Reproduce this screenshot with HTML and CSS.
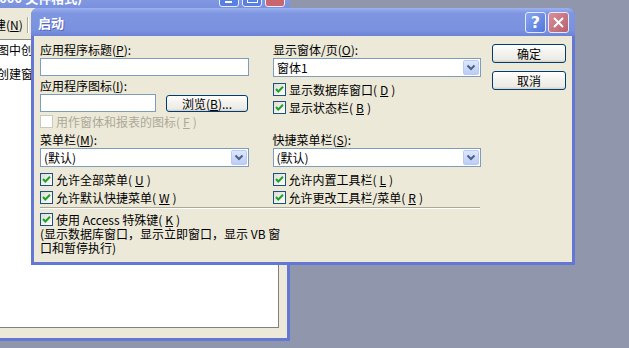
FILE: index.html
```html
<!DOCTYPE html>
<html lang="zh-CN">
<head>
    <meta charset="UTF-8">
    <meta name="viewport" content="width=device-width, initial-scale=1.0">
    <title>启动</title>
    <link rel="stylesheet" href="styles.css">
</head>
<body>
<div class="desktop">
    <!-- database window behind the dialog -->
    <div class="db-window">
        <div class="db-title">
            <span class="db-caption">数据库 (Access 2000 文件格式)</span>
            <div class="db-btns">
                <span class="tb tb-min"></span>
                <span class="tb tb-max"></span>
                <span class="tb tb-close"></span>
            </div>
        </div>
        <div class="db-toolbar">
            <span>新建(<u>N</u>)</span>
            <span class="tsep"></span>
        </div>
        <div class="db-frame">
            <div class="db-list">
                <div class="db-item">在设计视图中创建窗体</div>
                <div class="db-item">使用向导创建窗体</div>
            </div>
        </div>
    </div>

    <!-- startup dialog -->
    <div class="dialog">
        <div class="dlg-title">
            <span class="dlg-caption">启动</span>
            <span class="cap-btn cap-help">?</span>
            <span class="cap-btn cap-close">
                <svg width="13" height="13" viewBox="0 0 13 13"><path d="M2 2 L11 11 M11 2 L2 11" stroke="#fff" stroke-width="2" fill="none"/></svg>
            </span>
        </div>
        <div class="dlg-body">
            <div class="main">
                <div class="top">
                    <div class="col">
                        <div class="lbl">应用程序标题(<u>P</u>):</div>
                        <div class="edit"></div>
                        <div class="lbl lbl-2">应用程序图标(<u>I</u>):</div>
                        <div class="icon-row">
                            <div class="edit edit-short"></div>
                            <button class="btn browse">浏览(<u>B</u>)...</button>
                        </div>
                        <div class="chk chk-off disabled"><span class="box"></span>用作窗体和报表的图标(<u>F</u>)</div>
                    </div>
                    <div class="col">
                        <div class="lbl">显示窗体/页(<u>O</u>):</div>
                        <div class="combo"><span class="combo-text">窗体1</span><span class="drop"><svg width="16" height="15" viewBox="0 0 16 15"><path d="M4.5 5.5 L8 9 L11.5 5.5" stroke="#4d6185" stroke-width="2" fill="none"/></svg></span></div>
                        <div class="chk chk-first"><span class="box"><svg width="11" height="11" viewBox="0 0 11 11"><path d="M2 5 L4.3 7.5 L9 2.8" stroke="#21a121" stroke-width="2" fill="none"/></svg></span>显示数据库窗口(<u>D</u>)</div>
                        <div class="chk"><span class="box"><svg width="11" height="11" viewBox="0 0 11 11"><path d="M2 5 L4.3 7.5 L9 2.8" stroke="#21a121" stroke-width="2" fill="none"/></svg></span>显示状态栏(<u>B</u>)</div>
                    </div>
                </div>

                <div class="mid">
                    <div class="col">
                        <div class="lbl">菜单栏(<u>M</u>):</div>
                        <div class="combo"><span class="combo-text">(默认)</span><span class="drop"><svg width="16" height="15" viewBox="0 0 16 15"><path d="M4.5 5.5 L8 9 L11.5 5.5" stroke="#4d6185" stroke-width="2" fill="none"/></svg></span></div>
                        <div class="chk chk-first"><span class="box"><svg width="11" height="11" viewBox="0 0 11 11"><path d="M2 5 L4.3 7.5 L9 2.8" stroke="#21a121" stroke-width="2" fill="none"/></svg></span>允许全部菜单(<u>U</u>)</div>
                        <div class="chk"><span class="box"><svg width="11" height="11" viewBox="0 0 11 11"><path d="M2 5 L4.3 7.5 L9 2.8" stroke="#21a121" stroke-width="2" fill="none"/></svg></span>允许默认快捷菜单(<u>W</u>)</div>
                    </div>
                    <div class="col">
                        <div class="lbl">快捷菜单栏(<u>S</u>):</div>
                        <div class="combo"><span class="combo-text">(默认)</span><span class="drop"><svg width="16" height="15" viewBox="0 0 16 15"><path d="M4.5 5.5 L8 9 L11.5 5.5" stroke="#4d6185" stroke-width="2" fill="none"/></svg></span></div>
                        <div class="chk chk-first"><span class="box"><svg width="11" height="11" viewBox="0 0 11 11"><path d="M2 5 L4.3 7.5 L9 2.8" stroke="#21a121" stroke-width="2" fill="none"/></svg></span>允许内置工具栏(<u>L</u>)</div>
                        <div class="chk"><span class="box"><svg width="11" height="11" viewBox="0 0 11 11"><path d="M2 5 L4.3 7.5 L9 2.8" stroke="#21a121" stroke-width="2" fill="none"/></svg></span>允许更改工具栏/菜单(<u>R</u>)</div>
                    </div>
                </div>

                <div class="sep"></div>

                <div class="chk chk-keys"><span class="box"><svg width="11" height="11" viewBox="0 0 11 11"><path d="M2 5 L4.3 7.5 L9 2.8" stroke="#21a121" stroke-width="2" fill="none"/></svg></span>使用 Access 特殊键(<u>K</u>)</div>
                <p class="note">(显示数据库窗口，显示立即窗口，显示 VB 窗<br>口和暂停执行)</p>
            </div>

            <div class="buttons">
                <button class="btn">确定</button>
                <button class="btn">取消</button>
            </div>
        </div>
    </div>
</div>
</body>
</html>
```

FILE: styles.css
```css
body {
    margin: 0;
    font-family: "Noto Sans CJK SC", "Noto Sans", sans-serif;
    font-size: 12px;
    color: #000;
    background: #9097ad;
}
.desktop {
    position: relative;
    width: 629px;
    height: 348px;
    overflow: hidden;
    background: #9097ad;
}
u {
    text-decoration: underline;
    text-underline-offset: 1px;
}

/* background database window */
.db-window {
    position: absolute;
    left: -60px;
    top: -14px;
    width: 350px;
    height: 355px;
    box-sizing: border-box;
    padding: 0 3px 3px;
    background: #6378d4;
    border-radius: 7px 7px 0 0;
    display: flex;
    flex-direction: column;
}
.db-title {
    height: 22px;
    margin: 0 -3px;
    display: flex;
    align-items: center;
    background: linear-gradient(#8fa5e8, #7990de);
    border-radius: 7px 7px 0 0;
}
.db-caption {
    margin-left: -40px;
    color: #fff;
    font-weight: bold;
    font-size: 13px;
    white-space: nowrap;
}
.db-btns {
    margin-left: auto;
    margin-right: 5px;
    display: flex;
    gap: 3px;
}
.tb {
    width: 20px;
    height: 19px;
    box-sizing: border-box;
    border: 1px solid #e8eefc;
    border-radius: 3px;
    background: #5a7fe2;
    position: relative;
}
.tb-min::after {
    content: "";
    position: absolute;
    left: 5px;
    bottom: 3px;
    width: 7px;
    height: 2px;
    background: #fff;
}
.tb-max::after {
    content: "";
    position: absolute;
    left: 4px;
    top: 3px;
    width: 9px;
    height: 8px;
    border: 1px solid #fff;
    border-top-width: 2px;
}
.tb-close {
    background: #c8656e;
}
.db-toolbar {
    height: 32px;
    box-sizing: border-box;
    background: #ece9d8;
    border-bottom: 1px solid #8e8c80;
    display: flex;
    align-items: center;
    padding: 2px 0 0 39px;
    font-size: 12px;
}
.tsep {
    width: 1px;
    height: 16px;
    margin-left: 4px;
    background: #aca899;
    border-right: 1px solid #fff;
}
.db-frame {
    flex: 1;
    background: #ece9d8;
    padding: 0 8px 10px 0;
    display: flex;
}
.db-list {
    flex: 1;
    background: #fff;
    border-right: 1px solid #808080;
    border-bottom: 1px solid #808080;
    padding-left: 6px;
    font-size: 12px;
}
.db-item {
    line-height: 20px;
    margin-bottom: 4px;
    white-space: nowrap;
}

/* startup dialog */
.dialog {
    position: absolute;
    left: 31px;
    top: 8px;
    width: 544px;
    height: 257px;
    box-sizing: border-box;
    padding: 0 3px 3px;
    background: #6378d4;
    border-radius: 7px 7px 0 0;
    display: flex;
    flex-direction: column;
}
.dlg-title {
    height: 28px;
    margin: 0 -3px;
    display: flex;
    align-items: center;
    background: linear-gradient(#9cb1ee 0%, #7f96e2 18%, #7a91df 80%, #6d82d6 100%);
    border-radius: 7px 7px 0 0;
}
.dlg-caption {
    margin-left: 7px;
    color: #fff;
    font-weight: bold;
    font-size: 13px;
    text-shadow: 1px 1px 0 #5668c0;
}
.cap-btn {
    width: 21px;
    height: 21px;
    box-sizing: border-box;
    border: 1px solid #e4eafb;
    border-radius: 3px;
    display: flex;
    align-items: center;
    justify-content: center;
    color: #fff;
    font: bold 16px "DejaVu Sans", sans-serif;
}
.cap-help {
    margin-left: auto;
    background: linear-gradient(135deg, #8aa6ee, #5277dc);
}
.cap-close {
    margin-left: 2px;
    margin-right: 6px;
    background: linear-gradient(135deg, #d88f98, #b8606c);
}
.dlg-body {
    flex: 1;
    background: #ece9d8;
    display: flex;
    padding: 7px 0 0 6px;
}
.main {
    width: 441px;
}
.top {
    display: flex;
    gap: 24px;
    height: 90px;
}
.mid {
    display: flex;
    gap: 24px;
}
.col {
    width: 209px;
    display: flex;
    flex-direction: column;
}
.lbl {
    height: 13px;
    line-height: 13px;
    white-space: nowrap;
}
.lbl-2 {
    margin-top: 3px;
}
.edit {
    width: 209px;
    height: 18px;
    margin-top: 2px;
    box-sizing: border-box;
    border: 1px solid #7f9db9;
    background: #fff;
}
.icon-row {
    display: flex;
    gap: 10px;
    align-items: flex-start;
}
.edit-short {
    width: 116px;
}
.btn {
    width: 74px;
    height: 19px;
    padding: 0;
    box-sizing: border-box;
    border: 1px solid #003c74;
    border-radius: 3px;
    background: linear-gradient(#ffffff, #f4f3ee 40%, #ecebe6 85%, #d6d0c5);
    font-family: "Noto Sans CJK SC", "Noto Sans", sans-serif;
    font-size: 12px;
    line-height: 16px;
    color: #000;
}
.browse {
    width: 82px;
    height: 17px;
    margin-top: 3px;
    line-height: 14px;
}
.combo {
    height: 19px;
    margin-top: 2px;
    box-sizing: border-box;
    border: 1px solid #7f9db9;
    background: #fff;
    display: flex;
    align-items: center;
}
.combo-text {
    padding-left: 3px;
    line-height: 15px;
}
.drop {
    margin-left: auto;
    margin-right: 1px;
    width: 16px;
    height: 15px;
    box-sizing: border-box;
    border: 1px solid #b9cbf3;
    border-radius: 2px;
    background: linear-gradient(#dde7fd, #bccdf5);
    display: flex;
}
.drop svg {
    margin: -1px;
}
.chk {
    height: 18px;
    display: flex;
    align-items: center;
    gap: 3px;
    white-space: nowrap;
}
.chk-first {
    margin-top: 3px;
}
.top .chk-off {
    margin-top: 2px;
    height: 15px;
}
.box {
    width: 13px;
    height: 13px;
    box-sizing: border-box;
    border: 1px solid #1c5180;
    background: linear-gradient(135deg, #dcdcd7, #fff);
    display: flex;
    flex: none;
}
.disabled {
    color: #aca899;
}
.disabled .box {
    border-color: #cac8bb;
    background: #fff;
}
.sep {
    width: 440px;
    height: 1px;
    margin-top: 1px;
    background: #aca899;
    border-bottom: 1px solid #fff;
}
.chk-keys {
    margin-top: 1px;
}
.note {
    margin: -1px 0 0;
    line-height: 14px;
}
.buttons {
    margin-left: 11px;
    margin-top: 1px;
    display: flex;
    flex-direction: column;
    gap: 8px;
}
```
